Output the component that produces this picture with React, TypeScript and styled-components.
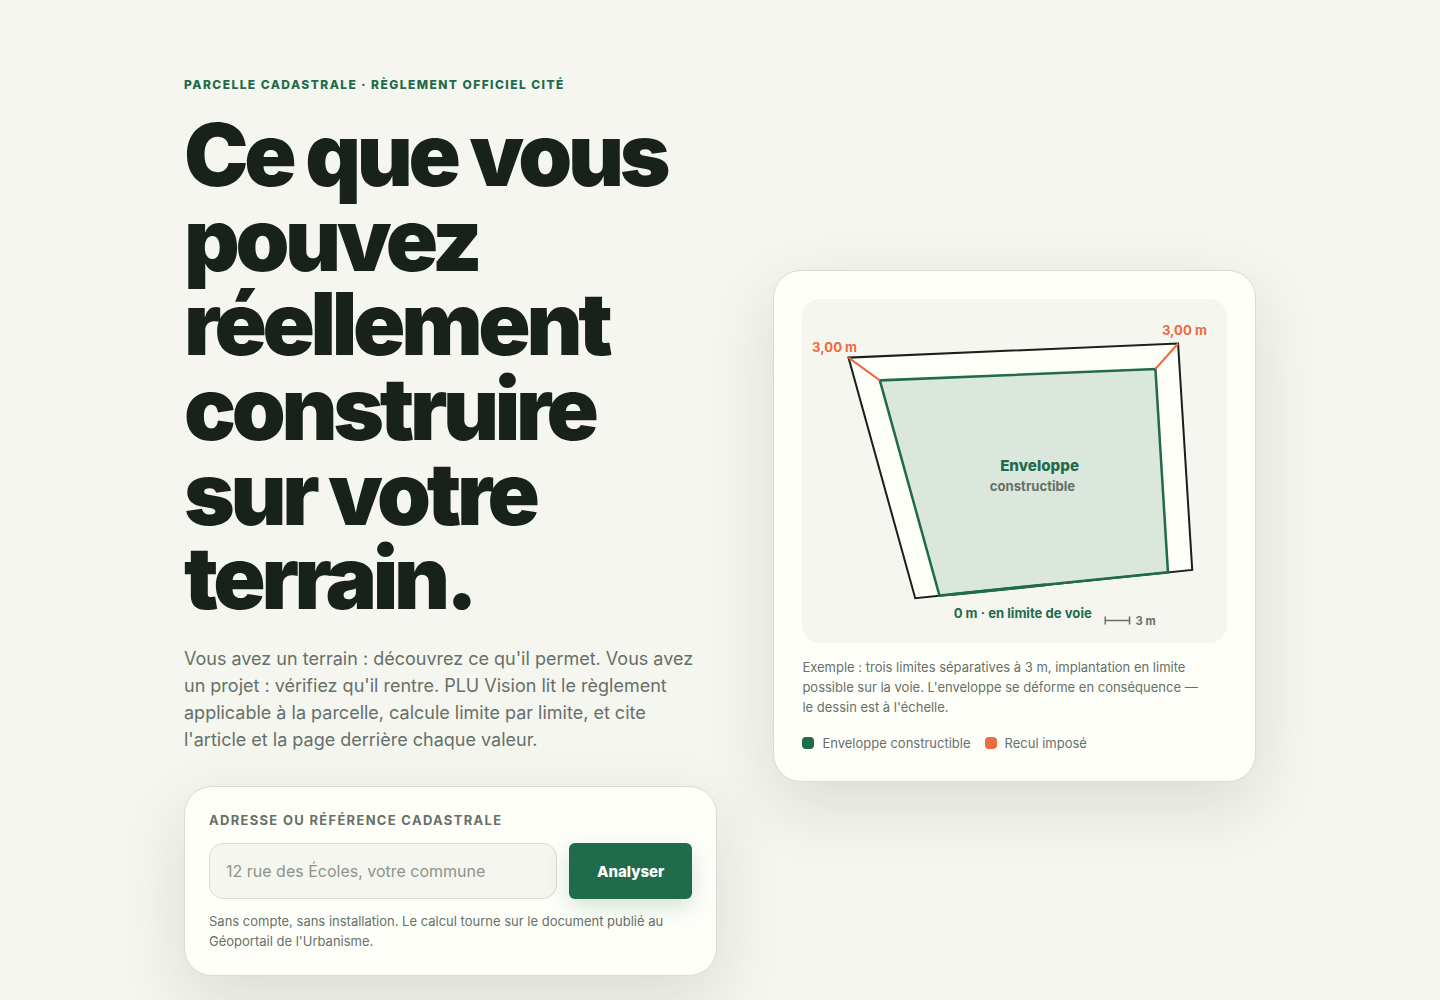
import React from "react";
import styled, { createGlobalStyle } from "styled-components";

const color = {
  paper: "#f5f6ef",
  card: "#fffffa",
  ink: "#18211b",
  muted: "#667069",
  green: "#1f6b4c",
  orange: "#ed6b3e",
  line: "#d9dcd5",
};

const GlobalStyle = createGlobalStyle`
  *, *::before, *::after { box-sizing: border-box; }
  body {
    margin: 0;
    background: ${color.paper};
    color: ${color.ink};
    font-family: Inter, "Liberation Sans", sans-serif;
  }
`;

const Hero = styled.main`
  display: grid;
  grid-template-columns: 21fr 19fr;
  gap: 56px;
  align-items: center;
  max-width: 1120px;
  margin: 0 auto;
  padding: 76px 24px;

  @media (max-width: 860px) {
    grid-template-columns: 1fr;
  }
`;

const Intro = styled.div`
  min-width: 0;
`;

const Eyebrow = styled.p`
  margin: 0 0 19px;
  color: ${color.green};
  font-size: 12px;
  font-weight: 800;
  line-height: 18px;
  letter-spacing: 0.12em;
  text-transform: uppercase;
`;

const Title = styled.h1`
  margin: 0;
  font-size: clamp(44px, 6vw, 88px);
  font-weight: 900;
  line-height: 0.98;
  letter-spacing: -0.05em;
`;

const Lead = styled.p`
  max-width: 524px;
  margin: 24px 0 33px;
  color: ${color.muted};
  font-size: 18px;
  line-height: 27px;
`;

const Card = styled.div`
  background: ${color.card};
  border: 1px solid ${color.line};
  border-radius: 28px;
  box-shadow: 0 24px 70px rgba(24, 33, 27, 0.12);
`;

const SearchCard = styled(Card).attrs({ as: "form" })`
  padding: 24px;
`;

const FieldLabel = styled.label`
  display: block;
  margin-bottom: 14px;
  color: ${color.muted};
  font-size: 13px;
  font-weight: 700;
  line-height: 18px;
  letter-spacing: 0.1em;
  text-transform: uppercase;
`;

const FieldRow = styled.div`
  display: flex;
  gap: 12px;
`;

const AddressInput = styled.input`
  flex: 1;
  min-width: 0;
  height: 56px;
  padding: 0 16px;
  border: 1px solid ${color.line};
  border-radius: 14px;
  background: ${color.paper};
  color: ${color.ink};
  font: inherit;
  font-size: 16px;

  &::placeholder {
    color: #8e938c;
  }
`;

const SubmitButton = styled.button`
  height: 56px;
  padding: 0 28px;
  border: 0;
  border-radius: 6px;
  background: ${color.green};
  box-shadow: 0 8px 24px rgba(31, 107, 76, 0.2);
  color: #fff;
  font: inherit;
  font-size: 15px;
  font-weight: 800;
  cursor: pointer;
`;

const Note = styled.p`
  margin: 12px 0 0;
  color: ${color.muted};
  font-size: 13px;
  line-height: 20px;
`;

const ExampleCard = styled(Card).attrs({ as: "figure" })`
  min-width: 0;
  margin: 0;
  padding: 28px;
`;

const Plan = styled.svg`
  display: block;
  width: 100%;
  height: auto;
  border-radius: 18px;
  background: ${color.paper};
  font-weight: 700;
`;

const Caption = styled.figcaption`
  margin-top: 14px;
  color: ${color.muted};
  font-size: 13px;
  line-height: 20px;
`;

const Legend = styled.ul`
  display: flex;
  flex-wrap: wrap;
  gap: 14px;
  margin: 16px 0 0;
  padding: 0;
  list-style: none;
  color: ${color.muted};
  font-size: 13px;
  line-height: 20px;
`;

const LegendItem = styled.li`
  display: flex;
  align-items: center;
  gap: 8px;
`;

const Swatch = styled.span<{ $fill: string }>`
  width: 12px;
  height: 12px;
  border-radius: 4px;
  background: ${(p) => p.$fill};
`;

const legend = [
  { label: "Enveloppe constructible", fill: color.green },
  { label: "Recul imposé", fill: color.orange },
];

function ParcelPlan() {
  return (
    <Plan viewBox="0 0 420 340" role="img" aria-label="Plan de la parcelle et de son enveloppe constructible">
      <polygon points="46,58 372,44 386,268 112,296" fill={color.card} stroke={color.ink} strokeWidth="2" />
      <polygon
        points="77,80.5 349.6,69.2 362,270.4 136,293.4"
        fill={color.green}
        fillOpacity="0.16"
        stroke={color.green}
        strokeWidth="2.5"
      />
      <line x1="148" y1="292.3" x2="241" y2="282.7" stroke={color.green} strokeWidth="3" />
      <g stroke={color.orange} strokeWidth="2">
        <line x1="46" y1="58" x2="77" y2="80.5" />
        <line x1="372" y1="44" x2="349.6" y2="69.2" />
      </g>
      <g fill={color.orange} fontSize="13">
        <text x="10" y="52">3,00 m</text>
        <text x="356" y="36">3,00 m</text>
      </g>
      <text x="235" y="170" fill={color.green} fontSize="15" fontWeight="800" textAnchor="middle">Enveloppe</text>
      <text x="228" y="190" fill={color.muted} fontSize="13" textAnchor="middle">constructible</text>
      <text x="150" y="316" fill={color.green} fontSize="13">0 m · en limite de voie</text>
      <path d="M300 318H324M300 314v8M324 314v8" stroke={color.muted} strokeWidth="1.5" fill="none" />
      <text x="330" y="322.5" fill={color.muted} fontSize="11">3 m</text>
    </Plan>
  );
}

export default function App() {
  return (
    <>
      <GlobalStyle />
      <Hero>
        <Intro>
          <Eyebrow>Parcelle cadastrale · Règlement officiel cité</Eyebrow>
          <Title>Ce que vous pouvez réellement construire sur votre terrain.</Title>
          <Lead>
            Vous avez un terrain : découvrez ce qu'il permet. Vous avez un projet : vérifiez qu'il rentre. PLU Vision
            lit le règlement applicable à la parcelle, calcule limite par limite, et cite l'article et la page derrière
            chaque valeur.
          </Lead>
          <SearchCard onSubmit={(e: React.FormEvent) => e.preventDefault()}>
            <FieldLabel htmlFor="adresse">Adresse ou référence cadastrale</FieldLabel>
            <FieldRow>
              <AddressInput id="adresse" type="text" placeholder="12 rue des Écoles, votre commune" />
              <SubmitButton type="submit">Analyser</SubmitButton>
            </FieldRow>
            <Note>Sans compte, sans installation. Le calcul tourne sur le document publié au Géoportail de l'Urbanisme.</Note>
          </SearchCard>
        </Intro>
        <ExampleCard>
          <ParcelPlan />
          <Caption>
            Exemple : trois limites séparatives à 3 m, implantation en limite possible sur la voie. L'enveloppe se
            déforme en conséquence — le&nbsp;dessin est à l'échelle.
          </Caption>
          <Legend>
            {legend.map((item) => (
              <LegendItem key={item.label}>
                <Swatch $fill={item.fill} />
                {item.label}
              </LegendItem>
            ))}
          </Legend>
        </ExampleCard>
      </Hero>
    </>
  );
}
